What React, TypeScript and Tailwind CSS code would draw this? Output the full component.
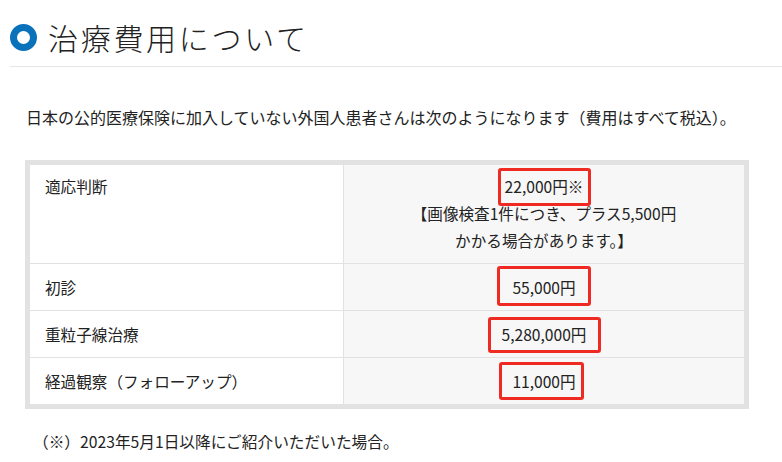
import React from "react";

// overlay box drawn round a price (red annotation in the picture)
function Price({
  text,
  box,
}: {
  text: string;
  box: string;
}) {
  return (
    <span className="relative inline-block">
      {text}
      <span
        className={`absolute border-[3px] border-[#ee2a22] rounded-[3px] ${box}`}
      />
    </span>
  );
}

const ROWS = [
  {
    label: "重粒子線治療",
    price: "5,280,000円",
    box: "-top-[4px] -bottom-[5px] -left-[14px] -right-[15px]",
  },
  {
    label: "経過観察（フォローアップ）",
    price: "11,000円",
    box: "-top-[6px] -bottom-[5px] -left-[13px] -right-[8px]",
  },
];

export default function App() {
  return (
    <div className="w-[782px] h-[462px] bg-white text-[#222] font-['Noto_Sans_CJK_JP','Noto_Sans',sans-serif] overflow-hidden">
      {/* heading */}
      <div className="flex items-center pl-[10px] pt-[19px] gap-[11px]">
        <div className="w-[27px] h-[27px] rounded-full border-[7px] border-[#0a72ba] bg-white" />
        <h2 className="text-[30px] leading-[36px] tracking-[2.7px] font-light text-[#222]">
          治療費用について
        </h2>
      </div>
      <div className="ml-[10px] mt-[11px] h-px bg-[#e6e6e6]" />

      <p className="ml-[26px] mt-[37px] text-[16px] leading-[27px]">
        日本の公的医療保険に加入していない外国人患者さんは次のようになります（費用はすべて税込）。
      </p>

      {/* fee table */}
      <div className="ml-[25px] mt-[29px] w-[724px] border-[5px] border-[#e2e2e2] text-[15.6px] leading-[27px]">
        <div className="flex h-[98px]">
          <div className="w-[314px] bg-white px-[15px] pt-[8px] border-r border-[#e2e2e2]">
            適応判断
          </div>
          <div className="flex-1 bg-[#f7f7f7] pt-[8px] text-center">
            <Price
              text="22,000円※"
              box="-top-[5px] -bottom-[6px] -left-[7px] -right-[8px]"
            />
            <div>【画像検査1件につき、プラス5,500円</div>
            <div>かかる場合があります。】</div>
          </div>
        </div>
        <div className="flex h-[47px] border-t border-[#e2e2e2]">
          <div className="w-[314px] bg-white px-[15px] flex items-center border-r border-[#e2e2e2]">
            初診
          </div>
          <div className="flex-1 bg-[#f7f7f7] flex items-center justify-center">
            <Price
              text="55,000円"
              box="-top-[8px] -bottom-[5px] -left-[15px] -right-[15px]"
            />
          </div>
        </div>
        {ROWS.map((row) => (
          <div key={row.label} className="flex h-[47px] border-t border-[#e2e2e2]">
            <div className="w-[314px] bg-white px-[15px] flex items-center border-r border-[#e2e2e2]">
              {row.label}
            </div>
            <div className="flex-1 bg-[#f7f7f7] flex items-center justify-center">
              <Price text={row.price} box={row.box} />
            </div>
          </div>
        ))}
      </div>

      <p className="ml-[33px] mt-[19px] text-[15.7px] leading-[27px]">
        （※）2023年5月1日以降にご紹介いただいた場合。
      </p>
    </div>
  );
}
